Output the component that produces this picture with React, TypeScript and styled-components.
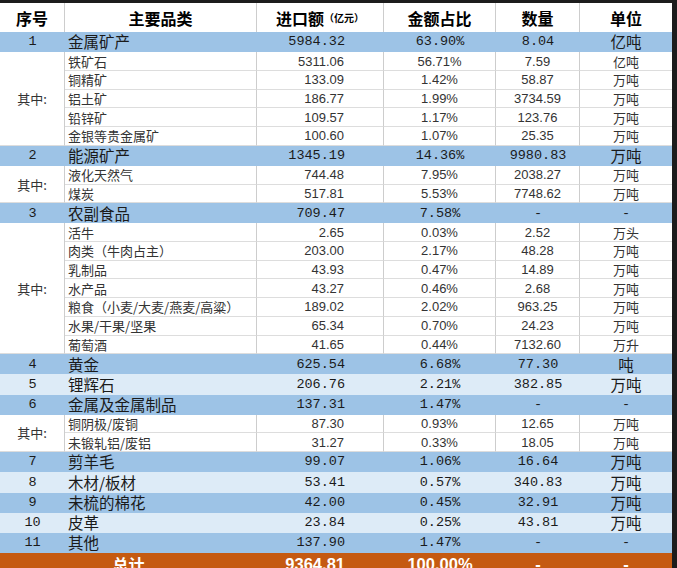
import React from 'react';
import styled, { createGlobalStyle } from 'styled-components';

const Global = createGlobalStyle`
  html, body { margin: 0; padding: 0; background: #1c1c1c; }
  body { font-family: "Noto Sans CJK SC", sans-serif; }
`;

type Tone = 'head' | 'main' | 'light' | 'sub' | 'total';
type Font = 'cjk' | 'mono' | 'sans';
type Align = 'left' | 'center' | 'right';

const BG: Record<Tone, string> = {
  head: '#ffffff',
  main: '#9dc3e6',
  light: '#ddebf7',
  sub: '#ffffff',
  total: '#c55a11',
};

const HEIGHT: Record<Tone, number> = {
  head: 29,
  main: 20.2,
  light: 20.2,
  sub: 18.7,
  total: 22,
};

const fontCss = (tone: Tone, font: Font) => {
  if (tone === 'head') {
    return `font-family: "Noto Sans CJK SC", sans-serif; font-size: 16px; font-weight: 700; color: #000;`;
  }
  if (tone === 'total') {
    if (font === 'cjk') return `font-family: "Noto Sans CJK SC", sans-serif; font-size: 16px; font-weight: 700; color: #fff;`;
    return `font-family: "Liberation Sans", sans-serif; font-size: 16.5px; font-weight: 700; color: #fff;`;
  }
  if (tone === 'sub') {
    if (font === 'cjk') return `font-family: "Noto Sans CJK SC", sans-serif; font-size: 13px; font-weight: 400; color: #333;`;
    return `font-family: "Liberation Sans", sans-serif; font-size: 13px; font-weight: 400; color: #333;`;
  }
  if (font === 'cjk') return `font-family: "Noto Sans CJK SC", sans-serif; font-size: 15.5px; font-weight: 400; color: #1a1a1a;`;
  return `font-family: "Liberation Mono", monospace; font-size: 13.5px; font-weight: 400; color: #1a1a1a;`;
};

const Page = styled.div`
  padding-top: 3px;
  width: 677px;
  height: 565px;
  overflow: hidden;
  background: #1c1c1c;
`;

const Grid = styled.div<{ $rows: string }>`
  display: grid;
  width: 672px;
  grid-template-columns: 65px 192px 127px 112px 84px 92px;
  grid-template-rows: ${(p) => p.$rows};
  background: #fff;
`;

const Cell = styled.div<{
  $tone: Tone;
  $font?: Font;
  $align?: Align;
  $span?: number;
  $cols?: number;
  $last?: boolean;
}>`
  box-sizing: border-box;
  display: flex;
  align-items: center;
  justify-content: ${(p) =>
    p.$align === 'left' ? 'flex-start' : p.$align === 'right' ? 'flex-end' : 'center'};
  padding: ${(p) =>
    p.$align === 'left' ? '0 0 0 3px' : p.$align === 'right' ? '0 39px 0 0' : '0'};
  background: ${(p) => BG[p.$tone]};
  grid-row: ${(p) => (p.$span ? `span ${p.$span}` : 'auto')};
  grid-column: ${(p) => (p.$cols ? `span ${p.$cols}` : 'auto')};
  border-right: ${(p) =>
    (p.$tone === 'sub' || p.$tone === 'head') && !p.$last ? '1px solid #cdcdcd' : 'none'};
  border-bottom: ${(p) => (p.$tone === 'sub' ? '1px solid #dddddd' : 'none')};
  white-space: nowrap;
  line-height: 1;
  ${(p) => fontCss(p.$tone, p.$font || 'cjk')}
`;

const Small = styled.span`
  font-size: 10px;
  font-weight: 700;
`;

type Sub = [string, string, string, string, string];
type Group = {
  no: string;
  name: string;
  amt: string;
  pct: string;
  qty: string;
  unit: string;
  tone: 'main' | 'light';
  subs?: Sub[];
};

const DATA: Group[] = [
  {
    no: '1', name: '金属矿产', amt: '5984.32', pct: '63.90%', qty: '8.04', unit: '亿吨', tone: 'main',
    subs: [
      ['铁矿石', '5311.06', '56.71%', '7.59', '亿吨'],
      ['铜精矿', '133.09', '1.42%', '58.87', '万吨'],
      ['铝土矿', '186.77', '1.99%', '3734.59', '万吨'],
      ['铅锌矿', '109.57', '1.17%', '123.76', '万吨'],
      ['金银等贵金属矿', '100.60', '1.07%', '25.35', '万吨'],
    ],
  },
  {
    no: '2', name: '能源矿产', amt: '1345.19', pct: '14.36%', qty: '9980.83', unit: '万吨', tone: 'main',
    subs: [
      ['液化天然气', '744.48', '7.95%', '2038.27', '万吨'],
      ['煤炭', '517.81', '5.53%', '7748.62', '万吨'],
    ],
  },
  {
    no: '3', name: '农副食品', amt: '709.47', pct: '7.58%', qty: '-', unit: '-', tone: 'main',
    subs: [
      ['活牛', '2.65', '0.03%', '2.52', '万头'],
      ['肉类（牛肉占主）', '203.00', '2.17%', '48.28', '万吨'],
      ['乳制品', '43.93', '0.47%', '14.89', '万吨'],
      ['水产品', '43.27', '0.46%', '2.68', '万吨'],
      ['粮食（小麦/大麦/燕麦/高粱）', '189.02', '2.02%', '963.25', '万吨'],
      ['水果/干果/坚果', '65.34', '0.70%', '24.23', '万吨'],
      ['葡萄酒', '41.65', '0.44%', '7132.60', '万升'],
    ],
  },
  { no: '4', name: '黄金', amt: '625.54', pct: '6.68%', qty: '77.30', unit: '吨', tone: 'main' },
  { no: '5', name: '锂辉石', amt: '206.76', pct: '2.21%', qty: '382.85', unit: '万吨', tone: 'light' },
  {
    no: '6', name: '金属及金属制品', amt: '137.31', pct: '1.47%', qty: '-', unit: '-', tone: 'main',
    subs: [
      ['铜阴极/废铜', '87.30', '0.93%', '12.65', '万吨'],
      ['未锻轧铝/废铝', '31.27', '0.33%', '18.05', '万吨'],
    ],
  },
  { no: '7', name: '剪羊毛', amt: '99.07', pct: '1.06%', qty: '16.64', unit: '万吨', tone: 'main' },
  { no: '8', name: '木材/板材', amt: '53.41', pct: '0.57%', qty: '340.83', unit: '万吨', tone: 'light' },
  { no: '9', name: '未梳的棉花', amt: '42.00', pct: '0.45%', qty: '32.91', unit: '万吨', tone: 'main' },
  { no: '10', name: '皮革', amt: '23.84', pct: '0.25%', qty: '43.81', unit: '万吨', tone: 'light' },
  { no: '11', name: '其他', amt: '137.90', pct: '1.47%', qty: '-', unit: '-', tone: 'main' },
];

const rowHeights = (): string => {
  const h: number[] = [HEIGHT.head];
  DATA.forEach((g) => {
    h.push(HEIGHT[g.tone]);
    (g.subs || []).forEach(() => h.push(HEIGHT.sub));
  });
  h.push(HEIGHT.total);
  return h.map((v) => `${v}px`).join(' ');
};

const GroupRows: React.FC<{ g: Group }> = ({ g }) => (
  <>
    <Cell $tone={g.tone} $font="mono">{g.no}</Cell>
    <Cell $tone={g.tone} $align="left">{g.name}</Cell>
    <Cell $tone={g.tone} $font="mono" $align="right">{g.amt}</Cell>
    <Cell $tone={g.tone} $font="mono">{g.pct}</Cell>
    <Cell $tone={g.tone} $font="mono">{g.qty}</Cell>
    <Cell $tone={g.tone} $font={g.unit === '-' ? 'mono' : 'cjk'} $last>{g.unit}</Cell>
    {(g.subs || []).map((s, i) => (
      <React.Fragment key={s[0]}>
        {i === 0 && (
          <Cell $tone="sub" $span={g.subs!.length}>其中:</Cell>
        )}
        <Cell $tone="sub" $align="left">{s[0]}</Cell>
        <Cell $tone="sub" $font="sans" $align="right">{s[1]}</Cell>
        <Cell $tone="sub" $font="sans">{s[2]}</Cell>
        <Cell $tone="sub" $font="sans">{s[3]}</Cell>
        <Cell $tone="sub" $last>{s[4]}</Cell>
      </React.Fragment>
    ))}
  </>
);

export default function App() {
  return (
    <>
      <Global />
      <Page>
        <Grid $rows={rowHeights()}>
          <Cell $tone="head">序号</Cell>
          <Cell $tone="head">主要品类</Cell>
          <Cell $tone="head">
            进口额<Small>（亿元）</Small>
          </Cell>
          <Cell $tone="head">金额占比</Cell>
          <Cell $tone="head">数量</Cell>
          <Cell $tone="head" $last>单位</Cell>
          {DATA.map((g) => (
            <GroupRows key={g.no} g={g} />
          ))}
          <Cell $tone="total" $cols={2}>总计</Cell>
          <Cell $tone="total" $font="sans" $align="right">9364.81</Cell>
          <Cell $tone="total" $font="sans">100.00%</Cell>
          <Cell $tone="total" $font="sans">-</Cell>
          <Cell $tone="total" $font="sans" $last>-</Cell>
        </Grid>
      </Page>
    </>
  );
}
